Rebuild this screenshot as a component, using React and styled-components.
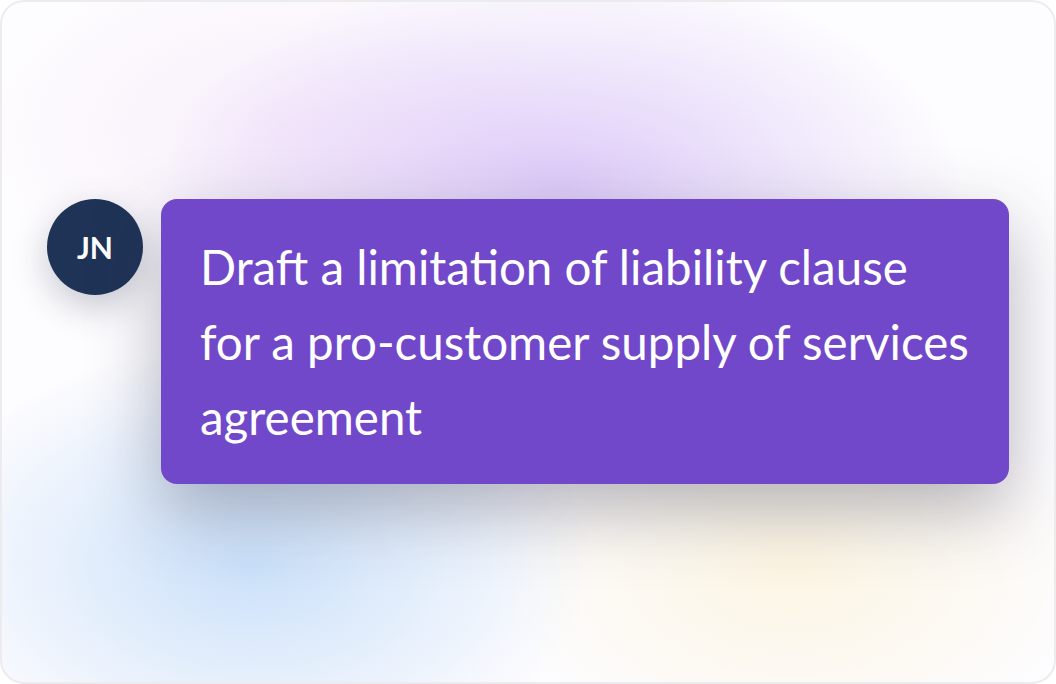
import React from 'react'
import styled, { createGlobalStyle } from 'styled-components'

const Global = createGlobalStyle`
    html, body {
        margin: 0;
        padding: 0;
        background: #fff;
    }
    body {
        font-family: Lato, "Open Sans", sans-serif;
    }
`;

const Frame = styled.div`
    box-sizing: border-box;
    width: 1056px;
    height: 684px;
    border: 2px solid #ececef;
    border-radius: 24px;
    overflow: hidden;
    background:
        radial-gradient(ellipse 400px 220px at 560px 185px, rgba(200, 170, 245, 0.6), rgba(200, 170, 245, 0) 100%),
        radial-gradient(ellipse 300px 180px at 280px 130px, rgba(240, 218, 246, 0.4), rgba(240, 218, 246, 0) 100%),
        radial-gradient(ellipse 340px 220px at 250px 560px, rgba(185, 215, 248, 0.75), rgba(185, 215, 248, 0) 100%),
        radial-gradient(ellipse 300px 200px at 790px 560px, rgba(252, 242, 215, 0.7), rgba(252, 242, 215, 0) 100%),
        #fdfcfe;
`;

const Row = styled.div`
    display: flex;
    align-items: flex-start;
    gap: 18px;
    padding: 197px 0 0 45px;
`;

const Avatar = styled.div`
    flex: none;
    width: 96px;
    height: 96px;
    border-radius: 50%;
    background: #1f3357;
    color: #fff;
    display: flex;
    align-items: center;
    justify-content: center;
    font-size: 30px;
    font-weight: 700;
    box-shadow: 0 12px 34px rgba(40, 50, 80, 0.25);
`;

const Bubble = styled.div`
    box-sizing: border-box;
    width: 848px;
    padding: 30px 35px 30px 39px;
    border-radius: 16px;
    background: #7148c9;
    color: #fff;
    font-size: 47.5px;
    line-height: 75px;
    box-shadow: 0 26px 70px rgba(50, 50, 75, 0.35);
`;

export default function App() {
    return (
        <Frame>
            <Global />
            <Row>
                <Avatar>JN</Avatar>
                <Bubble>
                    Draft a limitation of liability clause for a pro-customer supply of services agreement
                </Bubble>
            </Row>
        </Frame>
    )
}
